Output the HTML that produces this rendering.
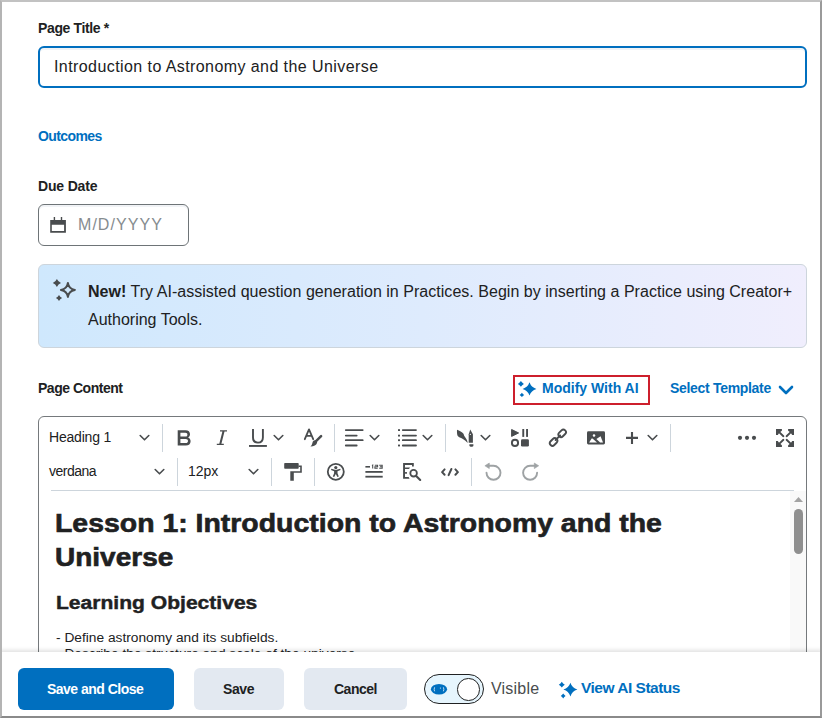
<!DOCTYPE html>
<html><head><meta charset="utf-8">
<style>
*{margin:0;padding:0;box-sizing:border-box}
html,body{width:822px;height:718px;overflow:hidden;background:#fff}
body{position:relative;font-family:"Liberation Sans",sans-serif;color:#202122}
.abs{position:absolute}
.t{position:absolute;white-space:nowrap;line-height:1}
.lbl{font-weight:bold;font-size:14px;color:#202122}
.blue{color:#006fbf}
#frame{position:absolute;left:0;top:0;width:822px;height:718px;border-style:solid;border-width:2px;border-color:#c2c2c2 #9a9a9a #8a8a8a #b4b4b4;z-index:50;pointer-events:none}
.sep{position:absolute;width:1px;background:#cdd5dc}
.chev{position:absolute}
</style></head>
<body>
<div id="frame"></div>

<!-- Page Title -->
<div class="t lbl" style="left:38px;top:21px;letter-spacing:-0.36px">Page Title *</div>
<div class="abs" style="left:38px;top:46px;width:769px;height:42px;border:2px solid #006fbf;border-radius:6px;box-shadow:inset 0 2px 0 rgba(185,194,208,.2)"></div>
<div class="t" style="left:54px;top:59px;font-size:16px;color:#202122;letter-spacing:0.42px">Introduction to Astronomy and the Universe</div>

<!-- Outcomes -->
<div class="t lbl blue" style="left:38px;top:129px;letter-spacing:-0.6px">Outcomes</div>

<!-- Due Date -->
<div class="t lbl" style="left:38px;top:179px;letter-spacing:-0.17px">Due Date</div>
<div class="abs" style="left:38px;top:204px;width:151px;height:42px;border:1px solid #6e7477;border-radius:6px;box-shadow:inset 0 2px 0 rgba(185,194,208,.2)"></div>
<svg class="abs" style="left:50px;top:217px" width="16" height="16" viewBox="0 0 16 16"><path fill="#494c4e" fill-rule="evenodd" d="M.2 3h15.7v12.8H.2zM1.8 7.7v6.4h12.3V7.7z"/><rect x="3.7" y="0" width="1.4" height="3.5" fill="#494c4e"/><rect x="10.8" y="0" width="1.4" height="3.5" fill="#494c4e"/></svg>
<div class="t" style="left:78px;top:217px;font-size:16px;color:#868c8f;letter-spacing:1.05px">M/D/YYYY</div>

<!-- Banner -->
<div class="abs" style="left:38px;top:264px;width:769px;height:84px;border:1px solid #cdd5dc;border-radius:6px;background:linear-gradient(90deg,#cfe8fd 0%,#deebfd 50%,#f0eefd 100%)"></div>
<svg class="abs" style="left:50px;top:276px" width="30" height="28" viewBox="0 0 30 28"><g fill="#494c4e"><path d="M6.9 2.9Q8.13 5.7 11 6.9Q8.13 8.1 6.9 10.9Q5.67 8.1 2.8 6.9Q5.67 5.7 6.9 2.9Z"/><path d="M9 18.9Q9.99 20.94 12.1 21.9Q9.99 22.86 9 24.9Q8.01 22.86 5.9 21.9Q8.01 20.94 9 18.9Z"/></g><path d="M17.9 6.9Q18.74 13.06 24.9 13.9Q18.74 14.74 17.9 20.9Q17.06 14.74 10.9 13.9Q17.06 13.06 17.9 6.9Z" fill="none" stroke="#494c4e" stroke-width="2" stroke-linejoin="round"/></svg>
<div class="t" style="left:88px;top:284px;letter-spacing:0.03px;font-size:16px;color:#202122"><b>New!</b> Try AI-assisted question generation in Practices. Begin by inserting a Practice using Creator+</div>
<div class="t" style="left:88px;top:312px;font-size:16px;color:#202122">Authoring Tools.</div>

<!-- Page Content header -->
<div class="t lbl" style="left:38px;top:381px;letter-spacing:-0.48px">Page Content</div>
<div class="abs" style="left:513px;top:375px;width:137px;height:30px;border:2px solid #cd1f2c"></div>
<svg class="abs" style="left:514px;top:378px" width="24" height="22" viewBox="0 0 24 22"><g fill="#006fbf"><path d="M6.9 3Q8.04 4.8 9.9 5.9Q8.04 7 6.9 8.8Q5.76 7 3.9 5.9Q5.76 4.8 6.9 3Z"/><path d="M7.9 14.7Q8.82 16.02 10.2 16.9Q8.82 17.78 7.9 19.1Q6.98 17.78 5.6 16.9Q6.98 16.02 7.9 14.7Z"/><path d="M15.5 4.3Q17.16 9.32 22.4 10.9Q17.16 12.48 15.5 17.5Q13.84 12.48 8.6 10.9Q13.84 9.32 15.5 4.3Z"/></g></svg>
<div class="t lbl blue" style="left:542px;top:381px">Modify With AI</div>
<div class="t lbl blue" style="left:670px;top:381px;letter-spacing:-0.31px">Select Template</div>
<svg class="abs" style="left:778px;top:385px" width="16" height="10" viewBox="0 0 16 10"><path d="M2 2l6 6 6-6" fill="none" stroke="#006fbf" stroke-width="2.6" stroke-linecap="round" stroke-linejoin="round"/></svg>

<!-- Editor -->
<div class="abs" style="left:38px;top:416px;width:769px;height:400px;border:1px solid #75797c;border-radius:6px"></div>
<!-- toolbar row 1 -->
<div class="t" style="left:49px;top:430px;font-size:14px;color:#202122;letter-spacing:-0.2px">Heading 1</div>
<svg class="abs" style="left:139px;top:434px" width="11" height="8" viewBox="0 0 11 8"><path d="M1.2 1.5l4.3 4.3 4.3-4.3" fill="none" stroke="#494c4e" stroke-width="1.6" stroke-linecap="round" stroke-linejoin="round"/></svg>
<div class="sep" style="left:162px;top:424px;height:28px"></div>
<svg class="abs" style="left:176px;top:428px" width="16" height="19" viewBox="0 0 16 19"><path fill="#494c4e" fill-rule="evenodd" d="M1.7 2.2H9.5C12.5 2.2 14 3.8 14 6.3C14 7.9 13.2 9 12 9.6C13.7 10.2 14.6 11.5 14.6 13.3C14.6 16 12.9 17.6 9.8 17.6H1.7ZM4.4 4.7V8.6H9.4C10.7 8.6 11.4 7.9 11.4 6.65C11.4 5.4 10.7 4.7 9.4 4.7ZM4.4 11V15.1H9.8C11.2 15.1 12 14.3 12 13.05C12 11.8 11.2 11 9.8 11Z"/></svg>
<svg class="abs" style="left:214px;top:429px" width="14" height="17" viewBox="0 0 14 17"><path fill="#494c4e" d="M6 1.3h7v1.1h-2.5L7.4 14.8h2.4v1.1h-7v-1.1h2.5L8.4 2.4H6z"/></svg>
<svg class="abs" style="left:248px;top:428px" width="20" height="20" viewBox="0 0 20 20"><path d="M5 1V9.5C5 12.8 7 14.6 9.95 14.6S14.9 12.8 14.9 9.5V1" fill="none" stroke="#494c4e" stroke-width="1.9"/><rect x="1" y="17" width="17.9" height="1.9" fill="#494c4e"/></svg>
<svg class="abs" style="left:273px;top:434px" width="11" height="8" viewBox="0 0 11 8"><path d="M1.2 1.5l4.3 4.3 4.3-4.3" fill="none" stroke="#494c4e" stroke-width="1.6" stroke-linecap="round" stroke-linejoin="round"/></svg>
<svg class="abs" style="left:303px;top:428px" width="20" height="20" viewBox="0 0 20 20"><g fill="none" stroke="#494c4e" stroke-width="1.8" stroke-linecap="round" stroke-linejoin="round"><path d="M1.8 11.2L6 1.4l4.2 9.8M3.3 7.8h5.4"/></g><path d="M18.1 8.2L12.8 13.4" stroke="#494c4e" stroke-width="2.5" stroke-linecap="round"/><path fill="#494c4e" d="M12 12.2C13.6 12.2 14.6 13.6 14 15C13.3 17 11 18.4 7.4 18.6C8.6 17.6 9 16.4 9.4 15C9.8 13.2 10.6 12.2 12 12.2Z"/></svg>
<div class="sep" style="left:334px;top:424px;height:28px"></div>
<svg class="abs" style="left:344px;top:428px" width="20" height="19" viewBox="0 0 20 19"><g stroke="#494c4e" stroke-width="1.8" stroke-linecap="round"><path d="M1.8 2.1h16.9M1.8 7.6h10.9M1.8 12.2h16.9M1.8 17.5h10.9"/></g></svg>
<svg class="abs" style="left:369px;top:434px" width="11" height="8" viewBox="0 0 11 8"><path d="M1.2 1.5l4.3 4.3 4.3-4.3" fill="none" stroke="#494c4e" stroke-width="1.6" stroke-linecap="round" stroke-linejoin="round"/></svg>
<svg class="abs" style="left:397px;top:428px" width="20" height="19" viewBox="0 0 20 19"><g fill="#494c4e"><rect x="1" y="1.2" width="2" height="1.8"/><rect x="1" y="6.7" width="2" height="1.8"/><rect x="1" y="11.3" width="2" height="1.8"/><rect x="1" y="16.6" width="2" height="1.8"/></g><g stroke="#494c4e" stroke-width="1.8" stroke-linecap="round"><path d="M5.8 2.1h13.2M5.8 7.6h13.2M5.8 12.2h13.2M5.8 17.5h13.2"/></g></svg>
<svg class="abs" style="left:422px;top:434px" width="11" height="8" viewBox="0 0 11 8"><path d="M1.2 1.5l4.3 4.3 4.3-4.3" fill="none" stroke="#494c4e" stroke-width="1.6" stroke-linecap="round" stroke-linejoin="round"/></svg>
<div class="sep" style="left:445px;top:424px;height:28px"></div>
<svg class="abs" style="left:455px;top:428px" width="20" height="20" viewBox="0 0 20 20"><g fill="#494c4e"><path d="M2 1.8C4.5 2.8 7.2 4.3 8.3 5.5C9 6.3 8.8 7.3 9.5 8.3C10.8 10 12.5 12.3 12.7 15C11.5 13.8 9.5 12 7.5 10.8C5.8 9.8 3.6 9.5 2.6 7.8C2 6.4 1.9 4 2 1.8Z"/><path d="M15.2 1.5L17.9 6.3V14.7H13.7V6.3Z"/><path d="M14.4 16.2H18.4V17.6C18.4 18.3 17.9 18.7 17.2 18.7H15.6C14.9 18.7 14.4 18.3 14.4 17.6Z"/></g><path d="M15.3 5.6l.75 1.5h-1.5z" fill="#fff"/></svg>
<svg class="abs" style="left:480px;top:434px" width="11" height="8" viewBox="0 0 11 8"><path d="M1.2 1.5l4.3 4.3 4.3-4.3" fill="none" stroke="#494c4e" stroke-width="1.6" stroke-linecap="round" stroke-linejoin="round"/></svg>
<svg class="abs" style="left:510px;top:428px" width="20" height="20" viewBox="0 0 20 20"><g fill="#494c4e"><path d="M1.6 1.5L8.6 4.95L1.6 8.4Z" stroke="#494c4e" stroke-width="1" stroke-linejoin="round"/><rect x="12.3" y="1" width="1.9" height="7.9"/><rect x="16.1" y="1" width="1.9" height="7.9"/><rect x="11" y="11.3" width="7.9" height="7.2" rx="1.3"/></g><circle cx="5" cy="14.9" r="3.1" fill="none" stroke="#494c4e" stroke-width="1.9"/></svg>
<svg class="abs" style="left:548px;top:428px" width="20" height="20" viewBox="0 0 20 20"><g fill="none" stroke="#494c4e" stroke-width="1.9"><rect x="-4.2" y="-2.6" width="8.4" height="5.2" rx="2.6" transform="translate(14.2 5.3) rotate(-45)"/><rect x="-4.2" y="-2.6" width="8.4" height="5.2" rx="2.6" transform="translate(5.6 14.0) rotate(-45)"/><path d="M7.6 12.0L12.2 7.4" stroke-linecap="round"/></g></svg>
<svg class="abs" style="left:586px;top:430px" width="20" height="16" viewBox="0 0 20 16"><rect x="1" y="1.2" width="18" height="13.2" rx="1.4" fill="#494c4e"/><g fill="#fff"><path d="M3.1 12.6L5.6 8.6Q6 8.2 6.5 8.6L11 12.6Z"/><path d="M10.4 8.9L14.6 6.3L17 12.6H14.1Z"/><circle cx="8" cy="5.6" r="1.25"/></g></svg>
<svg class="abs" style="left:624px;top:430px" width="16" height="16" viewBox="0 0 16 16"><path d="M8 1.9v12M2 7.9h12" stroke="#494c4e" stroke-width="2.1"/></svg>
<svg class="abs" style="left:647px;top:434px" width="11" height="8" viewBox="0 0 11 8"><path d="M1.2 1.5l4.3 4.3 4.3-4.3" fill="none" stroke="#494c4e" stroke-width="1.6" stroke-linecap="round" stroke-linejoin="round"/></svg>
<div class="sep" style="left:670px;top:424px;height:28px"></div>
<svg class="abs" style="left:737px;top:434px" width="20" height="8" viewBox="0 0 20 8"><g fill="#494c4e"><circle cx="3" cy="3.8" r="2.1"/><circle cx="10" cy="3.8" r="2.1"/><circle cx="17" cy="3.8" r="2.1"/></g></svg>
<svg class="abs" style="left:775px;top:428px" width="20" height="20" viewBox="0 0 20 20"><g fill="#494c4e"><g><path d="M1 1H6.9V2.8Q4.1 4.1 2.8 6.9H1Z"/><path d="M3.4 3.4L8.4 8.2" stroke="#494c4e" stroke-width="1.9" stroke-linecap="round"/></g><g transform="translate(20 0) scale(-1 1)"><path d="M1 1H6.9V2.8Q4.1 4.1 2.8 6.9H1Z"/><path d="M3.4 3.4L8.4 8.2" stroke="#494c4e" stroke-width="1.9" stroke-linecap="round"/></g><g transform="translate(0 20) scale(1 -1)"><path d="M1 1H6.9V2.8Q4.1 4.1 2.8 6.9H1Z"/><path d="M3.4 3.4L8.4 8.2" stroke="#494c4e" stroke-width="1.9" stroke-linecap="round"/></g><g transform="translate(20 20) scale(-1 -1)"><path d="M1 1H6.9V2.8Q4.1 4.1 2.8 6.9H1Z"/><path d="M3.4 3.4L8.4 8.2" stroke="#494c4e" stroke-width="1.9" stroke-linecap="round"/></g></g></svg>
<!-- toolbar row 2 -->
<div class="t" style="left:49px;top:464px;font-size:14px;color:#202122;letter-spacing:-0.5px">verdana</div>
<svg class="abs" style="left:154px;top:468px" width="11" height="8" viewBox="0 0 11 8"><path d="M1.2 1.5l4.3 4.3 4.3-4.3" fill="none" stroke="#494c4e" stroke-width="1.6" stroke-linecap="round" stroke-linejoin="round"/></svg>
<div class="sep" style="left:177px;top:458px;height:28px"></div>
<div class="t" style="left:188px;top:464px;font-size:14px;color:#202122">12px</div>
<svg class="abs" style="left:248px;top:468px" width="11" height="8" viewBox="0 0 11 8"><path d="M1.2 1.5l4.3 4.3 4.3-4.3" fill="none" stroke="#494c4e" stroke-width="1.6" stroke-linecap="round" stroke-linejoin="round"/></svg>
<div class="sep" style="left:271px;top:458px;height:28px"></div>
<svg class="abs" style="left:283px;top:462px" width="20" height="20" viewBox="0 0 20 20"><g fill="#494c4e"><rect x="1.2" y="1" width="14.5" height="5.7" rx=".8"/><path d="M15.5 3.5h3.3v7.3h-8v8H7.3V9.2h9.9V5h-1.7z"/></g></svg>
<div class="sep" style="left:314px;top:458px;height:28px"></div>
<svg class="abs" style="left:326px;top:462px" width="20" height="20" viewBox="0 0 20 20"><circle cx="9.8" cy="9.8" r="8" fill="none" stroke="#494c4e" stroke-width="1.8"/><circle cx="9.8" cy="5.6" r="1.6" fill="#494c4e"/><path fill="#494c4e" d="M5 7.9l.4-1.1 4.4 1.1 4.4-1.1.4 1.1-3.1 1.4v2l1.3 3.3-1.4.5-1.6-3-1.6 3-1.4-.5 1.3-3.3v-2z"/></svg>
<svg class="abs" style="left:364px;top:463px" width="20" height="17" viewBox="0 0 20 17"><g fill="#494c4e"><rect x="1.4" y="3" width="4.6" height="1.6"/><rect x="1.4" y="8" width="17.3" height="1.8"/><rect x="1.4" y="12.8" width="17.3" height="1.8"/></g><g fill="none" stroke="#494c4e" stroke-width="1.05"><path d="M8.7 5.4V2.1L8 2.6"/><path d="M10.8 2.3H13.6V3.75H10.9V5.3H13.7"/><path d="M15.2 2.3H18.2V5.3H15.2M15.9 3.75H18.2"/></g></svg>
<svg class="abs" style="left:402px;top:462px" width="20" height="20" viewBox="0 0 20 20"><g fill="#494c4e"><path d="M1.1 1.1H11.8V4.6H10V3.1H3V14.9H6.6L7.6 16.7H1.1Z"/><path d="M3 5.5H8L7 7.1H3Z"/><rect x="3" y="10.1" width="2" height="1.6"/></g><circle cx="11.6" cy="11.2" r="3.3" fill="none" stroke="#494c4e" stroke-width="1.8"/><path d="M14.2 13.9l4 4" stroke="#494c4e" stroke-width="2.1" stroke-linecap="round"/></svg>
<svg class="abs" style="left:440px;top:465px" width="20" height="14" viewBox="0 0 20 14"><g fill="none" stroke="#494c4e" stroke-width="2" stroke-linecap="round" stroke-linejoin="round"><path d="M4.6 4.4L2.1 7.1l2.5 2.7M15.4 4.4L17.9 7.1l-2.5 2.7M11.4 4L8.6 10.2"/></g></svg>
<div class="sep" style="left:471px;top:458px;height:28px"></div>
<svg class="abs" style="left:483px;top:462px" width="20" height="20" viewBox="0 0 20 20"><path d="M3.5 10.8A7 7 0 1 0 10.5 3.8H6" fill="none" stroke="#9ea2a4" stroke-width="1.9" stroke-linecap="round"/><path fill="#9ea2a4" stroke="#9ea2a4" stroke-width=".6" stroke-linejoin="round" d="M1.9 3.8L6.3 1V6.6Z"/></svg>
<svg class="abs" style="left:520px;top:462px" width="20" height="20" viewBox="0 0 20 20"><g transform="translate(20.6 0) scale(-1 1)"><path d="M3.5 10.8A7 7 0 1 0 10.5 3.8H6" fill="none" stroke="#9ea2a4" stroke-width="1.9" stroke-linecap="round"/><path fill="#9ea2a4" stroke="#9ea2a4" stroke-width=".6" stroke-linejoin="round" d="M1.9 3.8L6.3 1V6.6Z"/></g></svg>
<div class="abs" style="left:51px;top:490px;width:743px;height:1px;background:#cdd5dc"></div>
<!-- scrollbar -->
<div class="abs" style="left:790px;top:491px;width:16px;height:170px;background:#f9f9f9"></div>
<svg class="abs" style="left:793px;top:496px" width="11" height="7" viewBox="0 0 11 7"><path d="M5.5 1L10 6H1z" fill="#a3a3a3"/></svg>
<div class="abs" style="left:794px;top:509px;width:9px;height:45px;background:#8f8f8f;border-radius:5px"></div>
<!-- content -->
<div class="t" style="left:55px;top:511px;font-size:25px;font-weight:bold;color:#202122;-webkit-text-stroke:0.6px #202122;transform-origin:0 0;transform:scaleX(1.137)">Lesson 1: Introduction to Astronomy and the</div>
<div class="t" style="left:55px;top:545px;font-size:25px;font-weight:bold;color:#202122;-webkit-text-stroke:0.6px #202122;transform-origin:0 0;transform:scaleX(1.12)">Universe</div>
<div class="t" style="left:56px;top:594px;font-size:18px;font-weight:bold;color:#202122;-webkit-text-stroke:0.4px #202122;transform-origin:0 0;transform:scaleX(1.17)">Learning Objectives</div>
<div class="t" style="left:56px;top:632px;font-size:12px;color:#202122;transform-origin:0 0;transform:scaleX(1.145)">- Define astronomy and its subfields.</div>
<div class="t" style="left:56px;top:648px;font-size:12px;color:#202122;transform-origin:0 0;transform:scaleX(1.145)">- Describe the structure and scale of the universe.</div>

<!-- Footer -->
<div class="abs" style="left:0;top:652px;width:822px;height:66px;background:#fff;box-shadow:0 -2px 4px rgba(0,0,0,.12);z-index:10">
  <div class="abs" style="left:18px;top:16px;width:156px;height:42px;background:#006fbf;border-radius:6px"></div>
  <div class="t" style="left:47px;top:30px;font-size:14px;font-weight:bold;color:#fff;letter-spacing:-0.52px">Save and Close</div>
  <div class="abs" style="left:194px;top:16px;width:90px;height:42px;background:#e3e9f1;border-radius:6px"></div>
  <div class="t" style="left:223px;top:30px;font-size:14px;font-weight:bold;color:#202122;letter-spacing:-0.4px">Save</div>
  <div class="abs" style="left:304px;top:16px;width:103px;height:42px;background:#e3e9f1;border-radius:6px"></div>
  <div class="t" style="left:334px;top:30px;font-size:14px;font-weight:bold;color:#202122;letter-spacing:-0.5px">Cancel</div>
  <div class="abs" style="left:423.5px;top:21.5px;width:60.5px;height:30px;border:1.5px solid #202122;border-radius:15px;background:#e6f5fd"></div>
  <div class="abs" style="left:457px;top:26px;width:22.5px;height:22.5px;border:1.5px solid #202122;border-radius:50%;background:#fff"></div>
  <svg class="abs" style="left:430px;top:31px" width="18" height="12" viewBox="0 0 18 12"><ellipse cx="9" cy="6.3" rx="8.1" ry="5.3" fill="#006fbf"/><path d="M4.6 4.3q-.9 2 0 4M13.4 4.3q.9 2 0 4" fill="none" stroke="#cfe6f7" stroke-width=".9"/><rect x="9.9" y="4.6" width="1" height="1" fill="#cfe6f7"/></svg>
  <div class="t" style="left:491px;top:29px;font-size:16px;color:#494c4e;letter-spacing:0.2px">Visible</div>
  <svg class="abs" style="left:555px;top:26px" width="26" height="24" viewBox="0 0 26 24"><g fill="#006fbf"><path d="M6.8 3.8Q7.94 5.6 9.8 6.7Q7.94 7.8 6.8 9.6Q5.66 7.8 3.8 6.7Q5.66 5.6 6.8 3.8Z"/><path d="M8.2 15.6Q9.16 17.04 10.6 18Q9.16 18.96 8.2 20.4Q7.24 18.96 5.8 18Q7.24 17.04 8.2 15.6Z"/><path d="M15.4 4.7Q17.08 9.94 22.4 11.6Q17.08 13.26 15.4 18.5Q13.72 13.26 8.4 11.6Q13.72 9.94 15.4 4.7Z"/></g></svg>
  <div class="t" style="left:581px;top:28px;font-size:15.5px;font-weight:bold;color:#006fbf;letter-spacing:-0.5px">View AI Status</div>
</div>
</body></html>
